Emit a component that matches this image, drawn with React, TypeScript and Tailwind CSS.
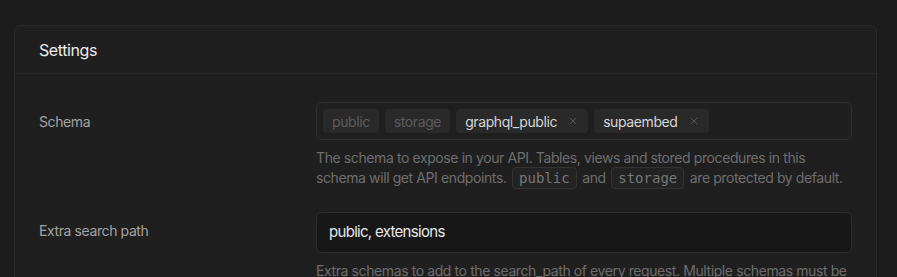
import { X } from "lucide-react";

const font = { fontFamily: "Inter, 'Noto Sans', sans-serif" };

function Tag({ label, removable }: { label: string; removable?: boolean }) {
  return (
    <span
      className={`flex h-6 items-center gap-2.5 rounded bg-[#292929] px-[9px] text-[14px] ${
        removable ? "text-[#d6d6d6]" : "text-[#5c5c5c]"
      }`}
    >
      {label}
      {removable && <X className="h-3 w-3 text-[#666]" strokeWidth={1.5} />}
    </span>
  );
}

function Code({ children }: { children: string }) {
  return (
    <code className="mx-[2px] rounded border border-[#333] bg-[#232323] px-1.5 py-0.5 font-['DejaVu_Sans_Mono',monospace] text-[14px] tracking-normal text-[#777]">
      {children}
    </code>
  );
}

export default function App() {
  return (
    <div
      className="min-h-[277px] bg-[#1c1c1c] pl-[14px] pr-[20px] pt-[25px] tracking-[-0.4px]"
      style={font}
    >
      <div className="rounded-md border border-[#2a2a2a] bg-[#1f1f1f]">
        {/* Header */}
        <div className="flex h-[48px] items-center border-b border-[#282828] px-6">
          <h2 className="text-[16px] text-[#ededed]">Settings</h2>
        </div>

        {/* Schema */}
        <div className="grid grid-cols-[277px_1fr] px-6 pt-7">
          <div className="flex h-[38px] items-center text-[14px] text-[#a3a3a3]">Schema</div>
          <div>
            <div className="flex h-[38px] items-center gap-1.5 rounded-md border border-[#2e2e2e] bg-[#1f1f1f] px-1.5">
              <Tag label="public" />
              <Tag label="storage" />
              <Tag label="graphql_public" removable />
              <Tag label="supaembed" removable />
            </div>
            <p className="mt-2 text-[14px] leading-5 text-[#6e6e6e]">
              The schema to expose in your API. Tables, views and stored procedures in this
              schema will get API endpoints. <Code>public</Code> and <Code>storage</Code> are
              protected by default.
            </p>
          </div>
        </div>

        {/* Extra search path */}
        <div className="grid grid-cols-[277px_1fr] px-6 pt-6">
          <div className="flex h-[37px] items-center text-[14px] text-[#a3a3a3]">
            Extra search path
          </div>
          <div>
            <div className="flex h-[41px] items-center rounded-md border border-[#2e2e2e] bg-[#171717] px-3 text-[15px] tracking-[-0.7px] text-[#e8e8e8]">
              public, extensions
            </div>
            <p className="mt-2 text-[14px] leading-5 text-[#6e6e6e]">
              Extra schemas to add to the search_path of every request. Multiple schemas must be
              comma-separated.
            </p>
          </div>
        </div>
      </div>
    </div>
  );
}
